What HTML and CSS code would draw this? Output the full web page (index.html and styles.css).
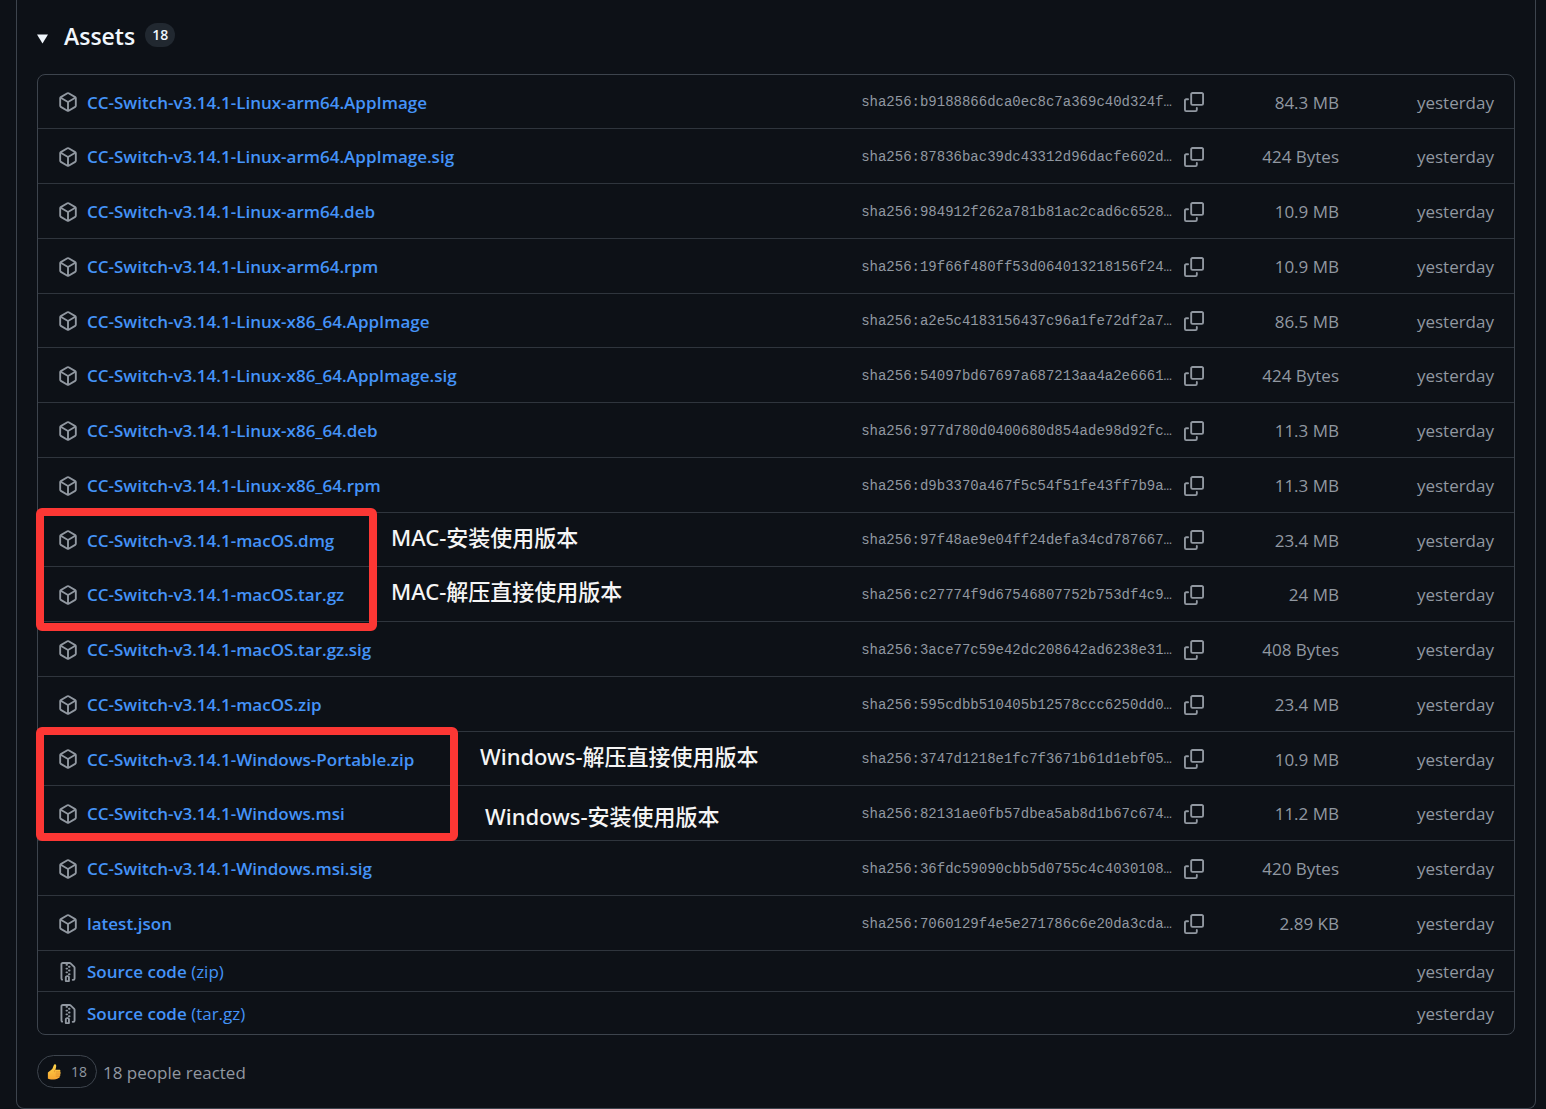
FILE: index.html
```html
<!DOCTYPE html>
<html lang="en">
<head>
  <meta charset="UTF-8">
  <meta name="viewport" content="width=device-width, initial-scale=1.0">
  <title>Release assets</title>
  <link rel="stylesheet" href="styles.css">
</head>
<body>
  <!-- Icons -->
  <svg class="sprite" aria-hidden="true">
    <symbol id="package" viewBox="0 0 16 16">
      <path d="m8.878.392 5.25 3.045c.54.314.872.89.872 1.514v6.098a1.75 1.75 0 0 1-.872 1.514l-5.25 3.045a1.75 1.75 0 0 1-1.756 0l-5.25-3.045A1.75 1.75 0 0 1 1 11.049V4.951c0-.624.332-1.201.872-1.514L7.122.392a1.75 1.75 0 0 1 1.756 0ZM7.875 1.69l-4.63 2.685L8 7.133l4.755-2.758-4.63-2.685a.248.248 0 0 0-.25 0ZM2.5 5.677v5.372c0 .09.047.171.125.216l4.625 2.683V8.432Zm6.25 8.271 4.625-2.683a.25.25 0 0 0 .125-.216V5.677L8.75 8.432Z"/>
    </symbol>
    <symbol id="copy" viewBox="0 0 16 16">
      <path d="M0 6.75C0 5.784.784 5 1.75 5h1.5a.75.75 0 0 1 0 1.5h-1.5a.25.25 0 0 0-.25.25v7.5c0 .138.112.25.25.25h7.5a.25.25 0 0 0 .25-.25v-1.5a.75.75 0 0 1 1.5 0v1.5A1.75 1.75 0 0 1 9.25 16h-7.5A1.75 1.75 0 0 1 0 14.25Z"/>
      <path d="M5 1.75C5 .784 5.784 0 6.75 0h7.5C15.216 0 16 .784 16 1.75v7.5A1.75 1.75 0 0 1 14.25 11h-7.5A1.75 1.75 0 0 1 5 9.25Zm1.75-.25a.25.25 0 0 0-.25.25v7.5c0 .138.112.25.25.25h7.5a.25.25 0 0 0 .25-.25v-7.5a.25.25 0 0 0-.25-.25Z"/>
    </symbol>
    <symbol id="zip" viewBox="0 0 16 16">
      <path d="M3.5 1.75v11.5c0 .09.048.173.126.217a.75.75 0 0 1-.752 1.298A1.748 1.748 0 0 1 2 13.25V1.75C2 .784 2.784 0 3.75 0h5.586c.464 0 .909.185 1.237.513l2.914 2.914c.329.328.513.773.513 1.237v8.586A1.75 1.75 0 0 1 12.25 15h-.5a.75.75 0 0 1 0-1.5h.5a.25.25 0 0 0 .25-.25V4.664a.25.25 0 0 0-.073-.177L9.513 1.573a.25.25 0 0 0-.177-.073H7.25a.75.75 0 0 1 0 1.5h-.5a.75.75 0 0 1 0-1.5h-3a.25.25 0 0 0-.25.25Zm3.75 8.75h.5c.966 0 1.75.784 1.75 1.75v3a.75.75 0 0 1-.75.75h-2.5a.75.75 0 0 1-.75-.75v-3c0-.966.784-1.75 1.75-1.75ZM6 5.25a.75.75 0 0 1 .75-.75h.5a.75.75 0 0 1 0 1.5h-.5A.75.75 0 0 1 6 5.25Zm.75 2.25h.5a.75.75 0 0 1 0 1.5h-.5a.75.75 0 0 1 0-1.5ZM8 6.75A.75.75 0 0 1 8.75 6h.5a.75.75 0 0 1 0 1.5h-.5A.75.75 0 0 1 8 6.75ZM8.75 3h.5a.75.75 0 0 1 0 1.5h-.5a.75.75 0 0 1 0-1.5ZM8 9.75A.75.75 0 0 1 8.75 9h.5a.75.75 0 0 1 0 1.5h-.5A.75.75 0 0 1 8 9.75Zm-1 2.5v2.25h1v-2.25a.25.25 0 0 0-.25-.25h-.5a.25.25 0 0 0-.25.25Z"/>
    </symbol>
  </svg>

  <main class="release">
    <details class="assets" open>
      <summary class="assets-title">
        <svg class="caret" viewBox="0 0 12 10"><path d="M0 0h12L6 10Z"/></svg>
        <h3>Assets</h3>
        <span class="counter">18</span>
      </summary>

      <ul class="asset-list">
        <li class="asset">
          <svg class="icon"><use href="#package"/></svg>
          <a class="name" href="#">CC-Switch-v3.14.1-Linux-arm64.AppImage</a>
          <span class="digest">sha256:b9188866dca0ec8c7a369c40d324f…</span>
          <button class="copy-btn" aria-label="Copy digest"><svg class="icon"><use href="#copy"/></svg></button>
          <span class="size">84.3 MB</span>
          <span class="date">yesterday</span>
        </li>
        <li class="asset">
          <svg class="icon"><use href="#package"/></svg>
          <a class="name" href="#">CC-Switch-v3.14.1-Linux-arm64.AppImage.sig</a>
          <span class="digest">sha256:87836bac39dc43312d96dacfe602d…</span>
          <button class="copy-btn" aria-label="Copy digest"><svg class="icon"><use href="#copy"/></svg></button>
          <span class="size">424 Bytes</span>
          <span class="date">yesterday</span>
        </li>
        <li class="asset">
          <svg class="icon"><use href="#package"/></svg>
          <a class="name" href="#">CC-Switch-v3.14.1-Linux-arm64.deb</a>
          <span class="digest">sha256:984912f262a781b81ac2cad6c6528…</span>
          <button class="copy-btn" aria-label="Copy digest"><svg class="icon"><use href="#copy"/></svg></button>
          <span class="size">10.9 MB</span>
          <span class="date">yesterday</span>
        </li>
        <li class="asset">
          <svg class="icon"><use href="#package"/></svg>
          <a class="name" href="#">CC-Switch-v3.14.1-Linux-arm64.rpm</a>
          <span class="digest">sha256:19f66f480ff53d064013218156f24…</span>
          <button class="copy-btn" aria-label="Copy digest"><svg class="icon"><use href="#copy"/></svg></button>
          <span class="size">10.9 MB</span>
          <span class="date">yesterday</span>
        </li>
        <li class="asset">
          <svg class="icon"><use href="#package"/></svg>
          <a class="name" href="#">CC-Switch-v3.14.1-Linux-x86_64.AppImage</a>
          <span class="digest">sha256:a2e5c4183156437c96a1fe72df2a7…</span>
          <button class="copy-btn" aria-label="Copy digest"><svg class="icon"><use href="#copy"/></svg></button>
          <span class="size">86.5 MB</span>
          <span class="date">yesterday</span>
        </li>
        <li class="asset">
          <svg class="icon"><use href="#package"/></svg>
          <a class="name" href="#">CC-Switch-v3.14.1-Linux-x86_64.AppImage.sig</a>
          <span class="digest">sha256:54097bd67697a687213aa4a2e6661…</span>
          <button class="copy-btn" aria-label="Copy digest"><svg class="icon"><use href="#copy"/></svg></button>
          <span class="size">424 Bytes</span>
          <span class="date">yesterday</span>
        </li>
        <li class="asset">
          <svg class="icon"><use href="#package"/></svg>
          <a class="name" href="#">CC-Switch-v3.14.1-Linux-x86_64.deb</a>
          <span class="digest">sha256:977d780d0400680d854ade98d92fc…</span>
          <button class="copy-btn" aria-label="Copy digest"><svg class="icon"><use href="#copy"/></svg></button>
          <span class="size">11.3 MB</span>
          <span class="date">yesterday</span>
        </li>
        <li class="asset">
          <svg class="icon"><use href="#package"/></svg>
          <a class="name" href="#">CC-Switch-v3.14.1-Linux-x86_64.rpm</a>
          <span class="digest">sha256:d9b3370a467f5c54f51fe43ff7b9a…</span>
          <button class="copy-btn" aria-label="Copy digest"><svg class="icon"><use href="#copy"/></svg></button>
          <span class="size">11.3 MB</span>
          <span class="date">yesterday</span>
        </li>
        <li class="asset">
          <svg class="icon"><use href="#package"/></svg>
          <a class="name" href="#">CC-Switch-v3.14.1-macOS.dmg</a>
          <span class="digest">sha256:97f48ae9e04ff24defa34cd787667…</span>
          <button class="copy-btn" aria-label="Copy digest"><svg class="icon"><use href="#copy"/></svg></button>
          <span class="size">23.4 MB</span>
          <span class="date">yesterday</span>
          <span class="frame frame-mac"></span>
          <span class="note note-mac" lang="zh-CN">MAC-安装使用版本</span>
        </li>
        <li class="asset">
          <svg class="icon"><use href="#package"/></svg>
          <a class="name" href="#">CC-Switch-v3.14.1-macOS.tar.gz</a>
          <span class="digest">sha256:c27774f9d67546807752b753df4c9…</span>
          <button class="copy-btn" aria-label="Copy digest"><svg class="icon"><use href="#copy"/></svg></button>
          <span class="size">24 MB</span>
          <span class="date">yesterday</span>
          <span class="note note-mac" lang="zh-CN">MAC-解压直接使用版本</span>
        </li>
        <li class="asset">
          <svg class="icon"><use href="#package"/></svg>
          <a class="name" href="#">CC-Switch-v3.14.1-macOS.tar.gz.sig</a>
          <span class="digest">sha256:3ace77c59e42dc208642ad6238e31…</span>
          <button class="copy-btn" aria-label="Copy digest"><svg class="icon"><use href="#copy"/></svg></button>
          <span class="size">408 Bytes</span>
          <span class="date">yesterday</span>
        </li>
        <li class="asset">
          <svg class="icon"><use href="#package"/></svg>
          <a class="name" href="#">CC-Switch-v3.14.1-macOS.zip</a>
          <span class="digest">sha256:595cdbb510405b12578ccc6250dd0…</span>
          <button class="copy-btn" aria-label="Copy digest"><svg class="icon"><use href="#copy"/></svg></button>
          <span class="size">23.4 MB</span>
          <span class="date">yesterday</span>
        </li>
        <li class="asset">
          <svg class="icon"><use href="#package"/></svg>
          <a class="name" href="#">CC-Switch-v3.14.1-Windows-Portable.zip</a>
          <span class="digest">sha256:3747d1218e1fc7f3671b61d1ebf05…</span>
          <button class="copy-btn" aria-label="Copy digest"><svg class="icon"><use href="#copy"/></svg></button>
          <span class="size">10.9 MB</span>
          <span class="date">yesterday</span>
          <span class="frame frame-windows"></span>
          <span class="note note-windows" lang="zh-CN">Windows-解压直接使用版本</span>
        </li>
        <li class="asset">
          <svg class="icon"><use href="#package"/></svg>
          <a class="name" href="#">CC-Switch-v3.14.1-Windows.msi</a>
          <span class="digest">sha256:82131ae0fb57dbea5ab8d1b67c674…</span>
          <button class="copy-btn" aria-label="Copy digest"><svg class="icon"><use href="#copy"/></svg></button>
          <span class="size">11.2 MB</span>
          <span class="date">yesterday</span>
          <span class="note note-installer" lang="zh-CN">Windows-安装使用版本</span>
        </li>
        <li class="asset">
          <svg class="icon"><use href="#package"/></svg>
          <a class="name" href="#">CC-Switch-v3.14.1-Windows.msi.sig</a>
          <span class="digest">sha256:36fdc59090cbb5d0755c4c4030108…</span>
          <button class="copy-btn" aria-label="Copy digest"><svg class="icon"><use href="#copy"/></svg></button>
          <span class="size">420 Bytes</span>
          <span class="date">yesterday</span>
        </li>
        <li class="asset">
          <svg class="icon"><use href="#package"/></svg>
          <a class="name" href="#">latest.json</a>
          <span class="digest">sha256:7060129f4e5e271786c6e20da3cda…</span>
          <button class="copy-btn" aria-label="Copy digest"><svg class="icon"><use href="#copy"/></svg></button>
          <span class="size">2.89 KB</span>
          <span class="date">yesterday</span>
        </li>
        <li class="asset source">
          <svg class="icon"><use href="#zip"/></svg>
          <a class="name" href="#">Source code <span>(zip)</span></a>
          <span class="date">yesterday</span>
        </li>
        <li class="asset source">
          <svg class="icon"><use href="#zip"/></svg>
          <a class="name" href="#">Source code <span>(tar.gz)</span></a>
          <span class="date">yesterday</span>
        </li>
      </ul>
    </details>

    <div class="reactions">
      <button class="reaction">
        <svg class="thumb" viewBox="0 0 16 18">
          <defs>
            <linearGradient id="skin" x1="0" y1="0" x2="0" y2="1">
              <stop offset="0" stop-color="#ffd54a"/>
              <stop offset="1" stop-color="#f7a531"/>
            </linearGradient>
          </defs>
          <path fill="url(#skin)" d="M1 9.5 6 5.500 8 .8C8.400-.2 10.300.1 10.500 1.500c.2 1.700-.4 3.300-1 5H14c1.300 0 1.800 1.500.9 2.300 1 .6.900 2.100 0 2.500.7.800.5 2-.5 2.400.4.900-.1 2-1.200 2.200C10.500 17.800 4 18.500 1 16.500Z"/>
          <path fill="none" stroke="#d9822b" stroke-width=".8" d="M14.800 8.900H10M14.900 11.300h-5M14.300 13.700H10M9.500 6.500C8 8 8.300 9 9 9.300"/>
        </svg>
        <span>18</span>
      </button>
      <span class="reacted">18 people reacted</span>
    </div>
  </main>
</body>
</html>
```
FILE: styles.css
```css
/* General */
* {
  margin: 0;
  padding: 0;
  box-sizing: border-box;
}

body {
  font-family: "Open Sans", "Noto Sans", "Noto Sans CJK SC", sans-serif;
  font-size: 17px;
  line-height: 24px;
  background: #0d1117;
  color: #9198a1;
}

button {
  font: inherit;
  color: inherit;
  background: none;
  border: none;
  cursor: pointer;
}

a {
  color: #4493f8;
  text-decoration: none;
}

a:hover {
  text-decoration: underline;
}

.sprite {
  display: none;
}

.icon {
  display: block;
  flex: none;
  width: 20px;
  height: 20px;
  fill: currentColor;
}

/* Release card */
.release {
  margin: 0 10px 0 16px;
  padding: 20px;
  border: 1px solid #3d444d;
  border-top: none;
  border-radius: 0 0 8px 8px;
}

.assets-title {
  display: flex;
  align-items: center;
  height: 30px;
  margin-bottom: 24px;
  color: #f0f6fc;
  list-style: none;
  cursor: pointer;
}

.assets-title h3 {
  margin: 0 10px 0 16px;
  padding-top: 2px;
  font-size: 23px;
  font-weight: 600;
}

.caret {
  width: 11px;
  height: 10px;
  margin-top: 8px;
  fill: currentColor;
}

.counter {
  padding: 0 7px;
  border-radius: 12px;
  background: #212830;
  font-size: 14px;
  font-weight: 600;
}

/* Asset rows */
.asset-list {
  list-style: none;
  border: 1px solid #3d444d;
  border-radius: 8px;
}

.asset {
  position: relative;
  display: flex;
  align-items: center;
  height: 55px;
  padding: 1px 20px 0;
  border-bottom: 1px solid #2f353d;
}

.asset:nth-child(4n+1) {
  height: 54px;
}

.asset.source {
  height: 41px;
}

.asset:last-child {
  height: 42px;
  border-bottom: none;
}

.name,
.size,
.date {
  padding-top: 1px;
}

.name {
  margin-left: 9px;
  margin-right: auto;
  font-weight: 600;
}

.name span {
  font-weight: 400;
}

.digest {
  font-family: "Liberation Mono", monospace;
  font-size: 14px;
}

.copy-btn {
  margin-left: 12px;
}

.size {
  width: 135px;
  text-align: right;
}

.date {
  width: 155px;
  text-align: right;
}

/* Marks drawn over the rows */
.frame {
  position: absolute;
  z-index: 1;
  top: -5px;
  left: -2px;
  border: 8px solid #fc3734;
  border-radius: 6px;
}

.frame-mac {
  width: 341px;
  height: 123px;
}

.frame-windows {
  width: 422px;
  height: 114px;
}

.note {
  position: absolute;
  top: 12px;
  color: #f5f5f5;
  font-family: "Noto Sans", "Noto Sans CJK SC", sans-serif;
  font-size: 22px;
  font-weight: 500;
}

.note-mac {
  left: 353px;
}

.note-windows {
  left: 442px;
}

.note-installer {
  top: 18px;
  left: 447px;
}

/* Reactions */
.reactions {
  display: flex;
  align-items: center;
  gap: 6px;
  margin-top: 20px;
}

.reaction {
  display: flex;
  align-items: center;
  gap: 10px;
  height: 33px;
  padding: 0 9px;
  border: 1px solid #3d444d;
  border-radius: 17px;
  font-size: 14px;
}

.reacted {
  padding-top: 2px;
}

.thumb {
  width: 14px;
  height: 16px;
}
```
